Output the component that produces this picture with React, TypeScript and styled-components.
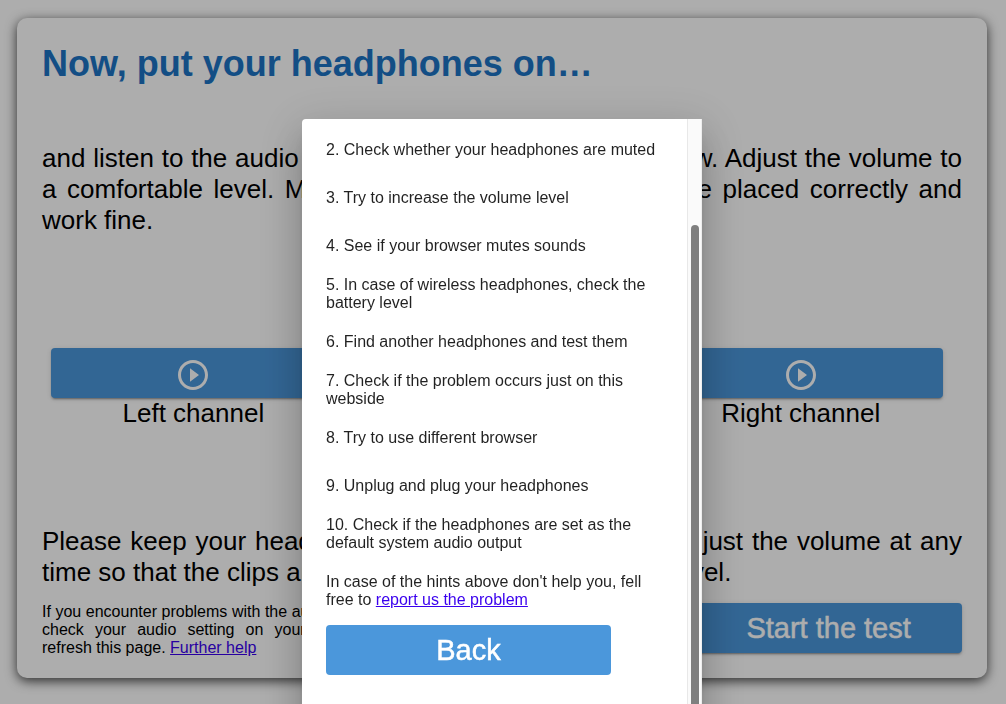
import React from "react";
import styled, { createGlobalStyle } from "styled-components";

const GlobalStyle = createGlobalStyle`
  * { box-sizing: border-box; }
  body {
    margin: 0;
    background: #fff;
    color: #000;
    font-family: "Liberation Sans", Arial, Helvetica, sans-serif;
    overflow: hidden;
  }
  h1, p, ol { margin: 0; padding: 0; }
  a { color: #3a00ee; }
`;

const Page = styled.main`
  padding: 18px 19px 26px 17px;
`;

const Card = styled.section`
  display: flex;
  flex-direction: column;
  padding: 25px 25px 21px;
  border-radius: 10px;
  background: #fff;
  box-shadow: 0 3px 12px rgba(0, 0, 0, 0.75);
`;

const Title = styled.h1`
  color: #1c74c4;
  font-size: 36px;
  line-height: 42px;
  font-weight: 700;
`;

const Lead = styled.p`
  font-size: 26px;
  line-height: 31px;
  text-align: justify;
`;

const Intro = styled(Lead)`
  margin-top: 58px;
`;

const Channels = styled.div`
  display: grid;
  grid-template-columns: repeat(3, 1fr);
  gap: 19px;
  margin: 112px 19px 97px 9px;
`;

const Channel = styled.label`
  display: flex;
  flex-direction: column;
  font-size: 26px;
  line-height: 31px;
  text-align: center;
`;

const Button = styled.button`
  height: 50px;
  padding: 0;
  border: 0;
  border-radius: 4px;
  background: #4b97db;
  color: #fff;
  font-family: inherit;
  font-size: 29px;
  line-height: 50px;
  -webkit-text-stroke: 0.5px #fff;
`;

const RaisedButton = styled(Button)`
  box-shadow: 0 3px 1px -2px rgba(0, 0, 0, 0.2), 0 2px 2px rgba(0, 0, 0, 0.14),
    0 1px 5px rgba(0, 0, 0, 0.12);
`;

const PlayButton = styled(RaisedButton)`
  display: flex;
  justify-content: center;
  align-items: center;
  padding-top: 4px;

  svg {
    width: 36px;
    height: 36px;
    fill: #fff;
  }
`;

const Footer = styled.footer`
  display: flex;
  justify-content: space-between;
  align-items: flex-start;
  margin-top: 15px;
`;

const Note = styled.p`
  flex: 0 1 345px;
  font-size: 16px;
  line-height: 18px;
  text-align: justify;
`;

const StartButton = styled(RaisedButton)`
  width: 29%;
`;

const Backdrop = styled.div`
  position: fixed;
  inset: 0;
  display: flex;
  justify-content: center;
  padding: 119px 2px 0 0;
  background: rgba(0, 0, 0, 0.32);
  overflow: hidden;
`;

const Dialog = styled.div`
  display: flex;
  width: 400px;
  margin-bottom: -60px;
  border-radius: 4px 0 0 4px;
  background: #fff;
  color: rgba(0, 0, 0, 0.87);
  box-shadow: 0 11px 15px -7px rgba(0, 0, 0, 0.2),
    0 24px 38px 3px rgba(0, 0, 0, 0.14), 0 9px 46px 8px rgba(0, 0, 0, 0.12);
`;

const DialogBody = styled.div`
  flex: 1;
  padding: 7px 24px;
  font-size: 16px;
  line-height: 18px;
`;

const Hints = styled.ol`
  list-style: none;
`;

const Hint = styled.li`
  display: flex;
  align-items: center;
  height: 48px;
`;

const Report = styled.p`
  margin: 15px 0 16px;
`;

const BackButton = styled(Button)`
  width: 285px;
`;

const ScrollTrack = styled.div`
  display: flex;
  justify-content: center;
  width: 15px;
  padding-top: 106px;
  border-left: 1px solid #e8e8e8;
  border-right: 1px solid #ededed;
  background: #fafafa;
`;

const ScrollThumb = styled.div`
  width: 8px;
  border-radius: 4px;
  background: #7f7f7f;
`;

const hints = [
  "Check whether your headphones are muted",
  "Try to increase the volume level",
  "See if your browser mutes sounds",
  "In case of wireless headphones, check the battery level",
  "Find another headphones and test them",
  "Check if the problem occurs just on this webside",
  "Try to use different browser",
  "Unplug and plug your headphones",
  "Check if the headphones are set as the default system audio output",
];

const PlayIcon = () => (
  <svg viewBox="0 0 24 24" aria-hidden="true">
    <path d="M10 16.5l6-4.5-6-4.5v9zM12 2C6.48 2 2 6.48 2 12s4.48 10 10 10 10-4.48 10-10S17.52 2 12 2zm0 18c-4.41 0-8-3.59-8-8s3.59-8 8-8 8 3.59 8 8-3.59 8-8 8z" />
  </svg>
);

export default function App() {
  return (
    <>
      <GlobalStyle />
      <Page>
        <Card>
          <Title>Now, put your headphones on…</Title>
          <Intro>
            and listen to the audio clips by pressing the buttons below. Adjust
            the volume to a comfortable level. Make sure that the headphones are
            placed correctly and work fine.
          </Intro>
          <Channels>
            {["Left channel", "Both channels", "Right channel"].map((name) => (
              <Channel key={name}>
                <PlayButton type="button">
                  <PlayIcon />
                </PlayButton>
                {name}
              </Channel>
            ))}
          </Channels>
          <Lead>
            Please keep your headphones on during the test and adjust the volume
            at any time so that the clips are played back at a comfortable
            level.
          </Lead>
          <Footer>
            <Note>
              If you encounter problems with the audio, please check your audio
              setting on your computer, refresh this page.{" "}
              <a href="#help">Further help</a>
            </Note>
            <StartButton type="button">Start the test</StartButton>
          </Footer>
        </Card>
      </Page>
      <Backdrop>
        <Dialog role="dialog" aria-modal="true" aria-label="Further help">
          <DialogBody>
            <Hints start={2}>
              {hints.map((hint, index) => (
                <Hint key={hint}>
                  {index + 2}. {hint}
                </Hint>
              ))}
            </Hints>
            <Report>
              In case of the hints above don't help you, fell free to{" "}
              <a href="#report">report us the problem</a>
            </Report>
            <BackButton type="button">Back</BackButton>
          </DialogBody>
          <ScrollTrack>
            <ScrollThumb />
          </ScrollTrack>
        </Dialog>
      </Backdrop>
    </>
  );
}
